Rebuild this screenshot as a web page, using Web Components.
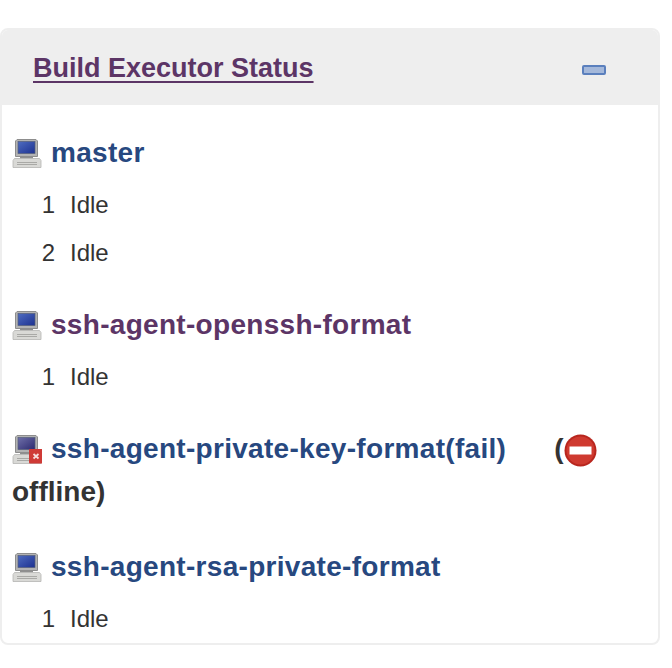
<!DOCTYPE html>
<html><head><meta charset="utf-8"><style>
html,body{margin:0;background:#fff}
body{width:672px;height:668px;overflow:hidden;font-family:"Liberation Sans",Arial,sans-serif;color:#333}
</style></head><body>
<executor-panel title-text="Build Executor Status">
<node-section name="master" rows="1,2"></node-section>
<node-section name="ssh-agent-openssh-format" visited rows="1"></node-section>
<node-section name="ssh-agent-private-key-format(fail)" offline></node-section>
<node-section name="ssh-agent-rsa-private-format" rows="1"></node-section>
</executor-panel>
<script>
const computer=(off)=>`<svg width="30" height="30" viewBox="0 0 30 30" style="flex:none;filter:blur(.45px)">
<defs><linearGradient id="s${off?1:0}" x1="0" y1="0" x2="1" y2="1"><stop offset="0" stop-color="${off?'#6f6fa8':'#4f6cc0'}"/><stop offset="1" stop-color="${off?'#2c2a70':'#1c3090'}"/></linearGradient></defs>
<path d="M5 1.5h19l1.5 1.5v15.5H3.5V3z" fill="#b3b3b3" stroke="#8d8d8d"/>
<rect x="6" y="3.5" width="17" height="12" fill="url(#s${off?1:0})" stroke="#555f7a" stroke-width=".7"/>
<path d="M8 18.5h13v2H8z" fill="#8f8f8f"/>
<path d="M2.5 20.5h25l1.5 2v7H1v-7z" fill="#d9d9d6" stroke="#b5b5b2" stroke-width=".8"/>
<path d="M5 24.5h20M5 26.5h20" stroke="#a9a9a6" stroke-width="1"/>
${off?`<rect x="17" y="15" width="14" height="14.5" rx="1" fill="#cf3a36"/><path d="M21.5 20l5 4.5M26.5 20l-5 4.5" stroke="#f6dcdc" stroke-width="1.8"/>`:''}
</svg>`;
const stop=`<svg width="33" height="33" viewBox="0 0 33 33" style="flex:none;margin:3px 0 0 0"><circle cx="16.5" cy="16.5" r="16" fill="#b8261e"/><circle cx="16.5" cy="16.5" r="14" fill="#cf3a30"/><rect x="5.5" y="12.5" width="22" height="8" fill="#fff"/></svg>`;
customElements.define('executor-panel',class extends HTMLElement{
constructor(){super();this.attachShadow({mode:'open'}).innerHTML=`<style>
:host{display:block;box-sizing:border-box;width:660px;margin-top:28px;border:2px solid #eeeeee;border-radius:8px;overflow:hidden;background:#fff}
header{box-sizing:border-box;height:75px;background:#eeeeee;display:flex;align-items:center;justify-content:space-between;padding:1px 52px 0 31px}
a{font-size:27px;font-weight:700;color:#5c3566;text-decoration:underline;text-underline-offset:4px}
.min{width:24px;height:10px;box-sizing:border-box;border:2px solid #5a7fbd;border-radius:2px;background:#a4b8da;filter:blur(.5px);margin-top:4px}
main{padding:26px 0 0 10px}
</style><header><a></a><span class="min"></span></header><main><slot></slot></main>`;
this.shadowRoot.querySelector('a').textContent=this.getAttribute('title-text');}
});
customElements.define('node-section',class extends HTMLElement{
constructor(){super();const off=this.hasAttribute('offline');const rows=(this.getAttribute('rows')||'').split(',').filter(Boolean);
this.attachShadow({mode:'open'}).innerHTML=`<style>
:host{display:block;margin-bottom:${off?32:26}px}
:host(:last-child){margin-bottom:0}
.h{font-size:28px;font-weight:700;line-height:43px;color:#333;height:${off?86:43}px;width:640px}
.l{display:flex;align-items:center;height:43px}
.n{color:${this.hasAttribute('visited')?'#5c3566':'#27487f'};margin-left:9px;letter-spacing:.3px}
.o{display:flex;align-items:center;margin-left:48px}
.r{display:flex;height:48px;align-items:center;font-size:24px;color:#333}
.i{width:43px;text-align:right}
.t{margin-left:15px}
.rows{margin-top:7px}
</style><div class="h"><div class="l">${computer(off)}<span class="n">${this.getAttribute('name')}</span>${off?`<span class="o">(${stop}</span>`:''}</div>${off?'<div>offline)</div>':''}</div>
${rows.length?`<div class="rows">${rows.map(r=>`<div class="r"><span class="i">${r}</span><span class="t">Idle</span></div>`).join('')}</div>`:''}`;}
});
</script>
</body></html>
